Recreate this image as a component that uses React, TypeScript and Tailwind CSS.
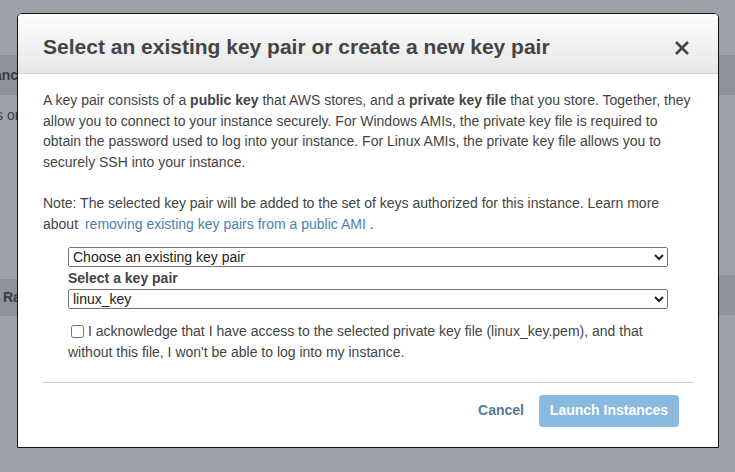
import React from "react";

export default function App() {
  const font = { fontFamily: '"Liberation Sans", Arial, sans-serif' };
  return (
    <div className="relative h-[472px] w-[735px] overflow-hidden bg-[#9ea3ab]" style={font}>
      {/* background page (dimmed) */}
      <div className="flex h-full w-full">
        <div className="flex w-[17px] flex-col overflow-hidden">
          <div className="mt-[55px] flex h-[40px] items-center whitespace-nowrap bg-[#8e939b] text-[14px] font-bold text-[#3a3d42]">
            <span className="-ml-[6px]">ance</span>
          </div>
          <div className="mt-[10px] whitespace-nowrap text-[14px] text-[#3a3d42]">
            <span className="-ml-[4px] inline-block">s or</span>
          </div>
          <div className="mt-[153px] flex h-[37px] items-center whitespace-nowrap bg-[#8e939b] text-[14px] font-bold text-[#3a3d42]">
            <span className="ml-[3px]">Ra</span>
          </div>
        </div>
        <div className="flex-1" />
        <div className="flex w-[17px] flex-col">
          <div className="mt-[55px] h-[40px] bg-[#8e939b]" />
          <div className="h-[180px] border-l border-[#8a8f96]" />
          <div className="h-[40px] bg-[#8e939b]" />
        </div>
      </div>

      {/* modal */}
      <div className="absolute left-[17px] top-[13px] w-[702px] rounded-t-[5px] border border-[#111] bg-white text-[#444]">
        <div className="flex h-[60px] items-start justify-between rounded-t-[4px] border-b border-[#cfd1d1] bg-gradient-to-b from-[#fdfdfd] to-[#e6e7e7] pl-[25px] pr-[28px] pt-[21px]">
          <h2 className="text-[21px] font-bold leading-[24px] text-[#444]">
            Select an existing key pair or create a new key pair
          </h2>
          <svg width="16" height="16" viewBox="0 0 16 16" className="mt-[5px]">
            <path d="M2 2 L14 14 M14 2 L2 14" stroke="#444" strokeWidth="2.6" strokeLinecap="butt" />
          </svg>
        </div>

        <div className="px-[25px] pt-[16px] pb-[20px] text-[14px] leading-[20.6px]">
          <p>
            A key pair consists of a <b>public key</b> that AWS stores, and a <b>private key file</b> that you store. Together, they
            allow you to connect to your instance securely. For Windows AMIs, the private key file is required to obtain the
            password used to log into your instance. For Linux AMIs, the private key file allows you to securely SSH into your
            instance.
          </p>
          <p className="mt-[21px]">
            Note: The selected key pair will be added to the set of keys authorized for this instance. Learn more about{" "}
            <span className="ml-[3px] text-[#4a7fb3]">removing existing key pairs from a public AMI</span> .
          </p>

          <div className="ml-[25px] mt-[12px] w-[600px]">
            <select className="block h-[20px] w-full rounded-[2px] border border-[#767676] bg-white pl-0 text-[14px] leading-[18px] text-[#222]" style={font} defaultValue="a">
              <option value="a">Choose an existing key pair</option>
            </select>
            <div className="mt-[1px] h-[21px] text-[14px] font-bold leading-[21px] text-[#444]">Select a key pair</div>
            <select className="block h-[20px] w-full rounded-[2px] border border-[#767676] bg-white pl-0 text-[14px] leading-[18px] text-[#222]" style={font} defaultValue="a">
              <option value="a">linux_key</option>
            </select>
            <div className="mt-[12px] leading-[21.5px]">
              <input type="checkbox" className="m-0 ml-[3px] mr-[4px] h-[13px] w-[13px] align-[-2px]" />I acknowledge that I have
              access to the selected private key file (linux_key.pem), and that without this file, I won't be able to log into
              my instance.
            </div>
          </div>

          <div className="mt-[18px] h-px bg-[#c8c8c8]" />

          <div className="mt-[12px] flex items-center justify-end gap-[15px] pr-[14px]">
            <span className="text-[14px] font-bold text-[#54799b]">Cancel</span>
            <button className="h-[32px] w-[140px] rounded-[4px] bg-[#89b9de] text-[14px] font-bold text-white" style={font}>
              Launch Instances
            </button>
          </div>
        </div>
      </div>
    </div>
  );
}
